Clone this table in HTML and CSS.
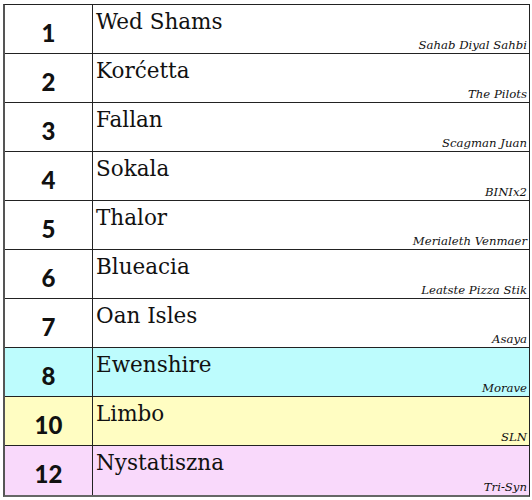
FILE: index.html
```html
<!DOCTYPE html>
<html>
<head>
<meta charset="utf-8">
<link rel="stylesheet" href="styles.css">
</head>
<body>
<div class="table">
  <div class="row"><div class="num">1</div><div class="info"><div class="name">Wed Shams</div><div class="credit">Sahab Diyal Sahbi</div></div></div>
  <div class="row"><div class="num">2</div><div class="info"><div class="name">Korćetta</div><div class="credit">The Pilots</div></div></div>
  <div class="row"><div class="num">3</div><div class="info"><div class="name">Fallan</div><div class="credit">Scagman Juan</div></div></div>
  <div class="row"><div class="num">4</div><div class="info"><div class="name">Sokala</div><div class="credit">BINIx2</div></div></div>
  <div class="row"><div class="num">5</div><div class="info"><div class="name">Thalor</div><div class="credit">Merialeth Venmaer</div></div></div>
  <div class="row"><div class="num">6</div><div class="info"><div class="name">Blueacia</div><div class="credit">Leatste Pizza Stik</div></div></div>
  <div class="row"><div class="num">7</div><div class="info"><div class="name">Oan Isles</div><div class="credit">Asaya</div></div></div>
  <div class="row cyan"><div class="num">8</div><div class="info"><div class="name">Ewenshire</div><div class="credit">Morave</div></div></div>
  <div class="row yellow"><div class="num">10</div><div class="info"><div class="name">Limbo</div><div class="credit">SLN</div></div></div>
  <div class="row pink"><div class="num">12</div><div class="info"><div class="name">Nystatiszna</div><div class="credit">Tri-Syn</div></div></div>
</div>
</body>
</html>
```
FILE: styles.css
```css
html, body { margin: 0; padding: 0; background: #fff; }
body { padding: 4px 2px 0 3px; }
.table {
  width: 527px;
  border-top: 1px solid #222;
  border-left: 2px solid #555;
  border-right: 1px solid #222;
  border-bottom: 2px solid #666;
  box-sizing: border-box;
}
.row {
  display: grid;
  grid-template-columns: 88px 1fr;
  height: 49px;
  border-bottom: 1px solid #222;
  box-sizing: border-box;
}
.row:last-child { border-bottom: none; height: 49px; }
.num {
  border-right: 1px solid #222;
  display: flex;
  align-items: center;
  justify-content: center;
  padding-top: 6px;
  font-family: "Lato", sans-serif;
  font-weight: 900;
  font-size: 24px;
  color: #111;
}
.info {
  display: flex;
  flex-direction: column;
  justify-content: space-between;
  padding: 4px 2px 1px 3px;
}
.name {
  font-family: "DejaVu Serif", serif;
  font-size: 21.5px;
  color: #111;
  line-height: 26px;
}
.credit {
  font-family: "DejaVu Serif", serif;
  font-style: italic;
  font-size: 11.7px;
  color: #111;
  text-align: right;
  line-height: 14px;
}
.cyan { background: #bdfcfd; }
.yellow { background: #fffdc2; }
.pink { background: #f9d9fb; }
```
